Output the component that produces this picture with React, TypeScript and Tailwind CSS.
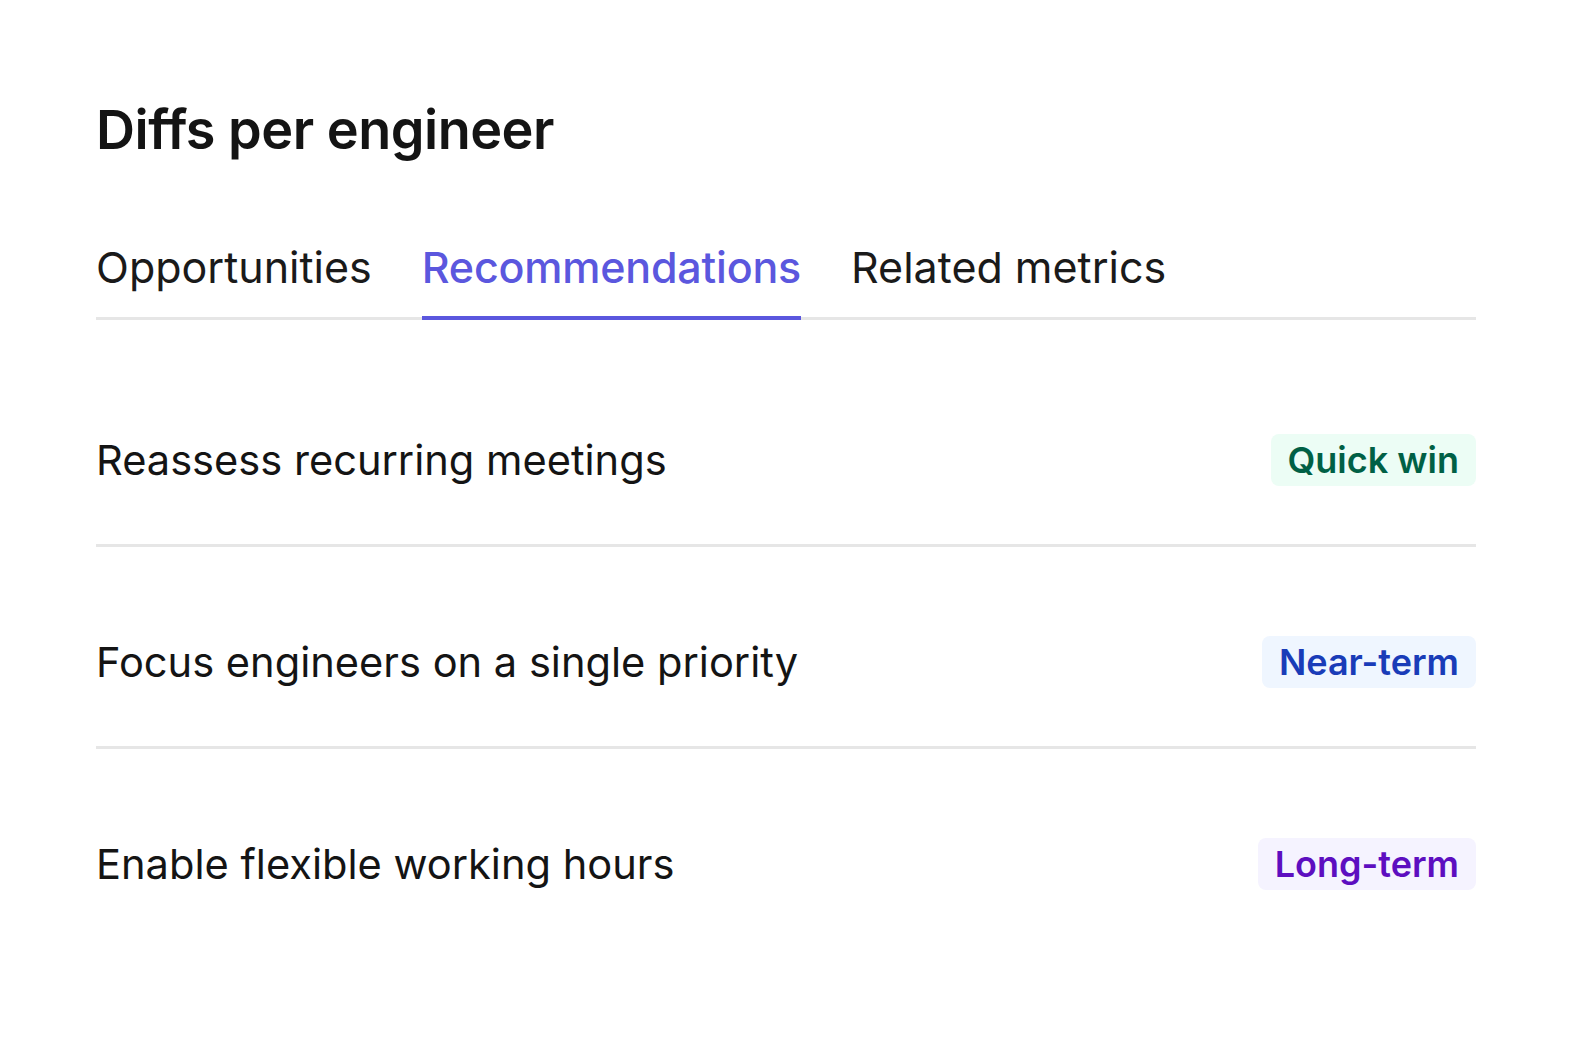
const tabs = ["Opportunities", "Recommendations", "Related metrics"];

const rows = [
  { title: "Reassess recurring meetings", tag: "Quick win", tone: "bg-emerald-50 text-emerald-800" },
  { title: "Focus engineers on a single priority", tag: "Near-term", tone: "bg-blue-50 text-blue-800" },
  { title: "Enable flexible working hours", tag: "Long-term", tone: "bg-violet-50 text-violet-800" },
];

export default function App() {
  const active = "Recommendations";

  return (
    <div className="min-h-screen bg-white font-['Inter',sans-serif] text-[#141414]">
      <div className="px-[96px] pt-[98px] w-[1572px]">
        <h1 className="text-[54px] leading-[64px] font-semibold tracking-[-0.5px]">Diffs per engineer</h1>

        <div className="mt-[78px] flex gap-[50px] border-b-[3px] border-[#e6e6e6]">
          {tabs.map((t) => (
            <button
              key={t}
              className={
                "-mb-[3px] pb-[22px] text-[43px] leading-[54px] border-b-[4px] " +
                (t === active
                  ? "border-[#5b57de] text-[#5b57de] font-medium tracking-[-0.2px]"
                  : "border-transparent text-[#1a1a1a]")
              }
            >
              {t}
            </button>
          ))}
        </div>

        <div className="mt-[114px]">
          {rows.map((r, i) => (
            <div
              key={r.title}
              className={
                "flex items-center justify-between " +
                (i < rows.length - 1 ? "pb-[58px] border-b-[3px] border-[#e6e6e6] mb-[89px]" : "")
              }
            >
              <span className="text-[41.6px] leading-[52px]">{r.title}</span>
              <span className={"rounded-lg px-[17px] h-[52px] flex items-center text-[36px] font-semibold " + r.tone}>
                {r.tag}
              </span>
            </div>
          ))}
        </div>
      </div>
    </div>
  );
}
